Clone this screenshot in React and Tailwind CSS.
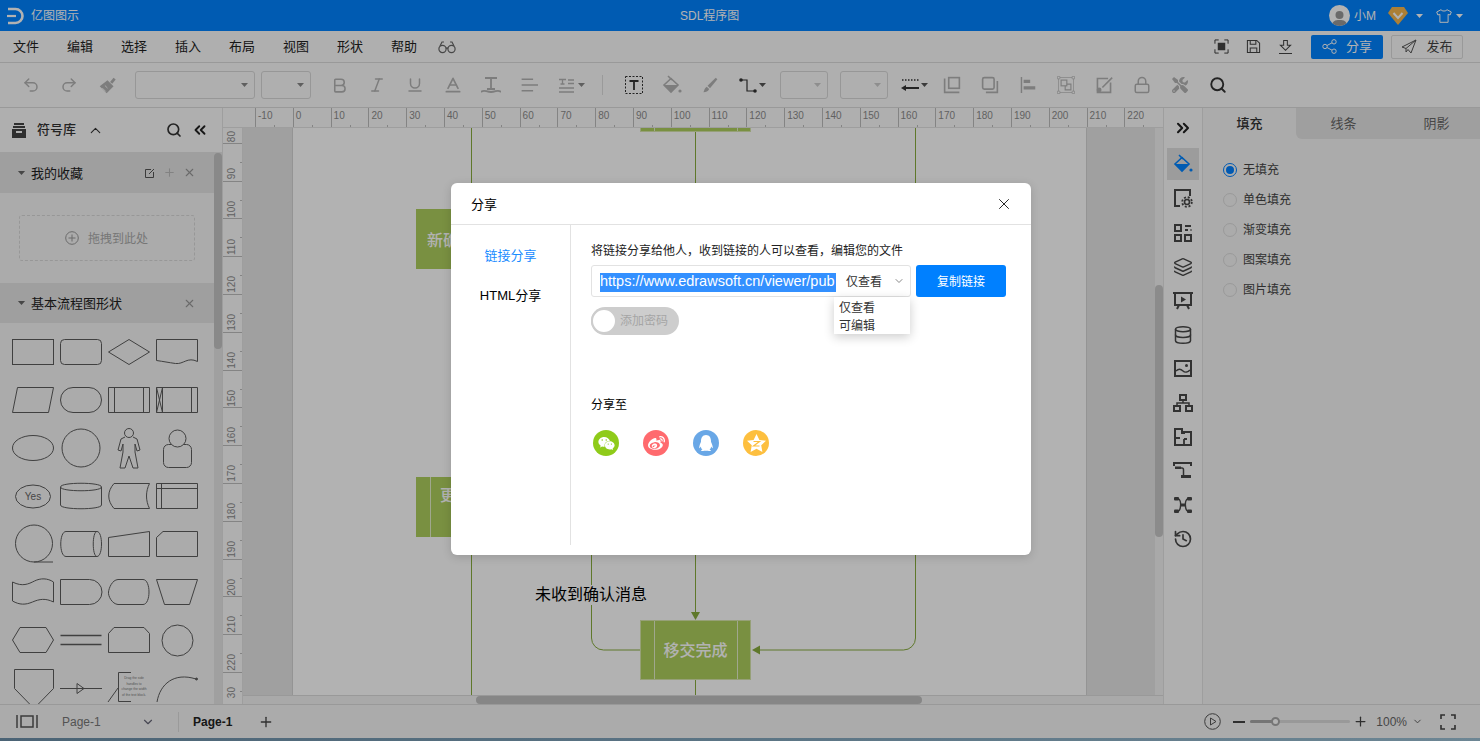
import {
  Baseline, Bold, ChevronDown, ChevronUp, ChevronsLeft, ChevronsRight, Database, History, Italic, Layers, Lock, Plus, Redo2,
  Search, Underline, Undo2, X,
} from 'lucide-react';
import { FaQq, FaTools, FaWeibo, FaWeixin } from 'react-icons/fa';

const font = { fontFamily: '"Liberation Sans", "Noto Sans CJK SC", sans-serif' };

const Caret = ({ className = '' }) => (
  <svg width="7" height="4" viewBox="0 0 9 5" className={className}><path d="M0 0h9L4.500 5z" fill="currentColor" /></svg>
);

const Svg = ({ size = 18, children, className = '', strokeWidth = 2 }) => (
  <svg width={size} height={size} viewBox="0 0 22 22" fill="none" stroke="currentColor" strokeWidth={strokeWidth} className={className}>
    {children}
  </svg>
);

/* ---------- left toolbar icons ---------- */
const BrushIcon = () => (
  <Svg size={19}>
    <path d="M2 12L11 5l7 7-8 8z" fill="currentColor" stroke="none" />
    <path d="M14 7l4-5 2.500 2-4 5z" fill="currentColor" stroke="none" />
    <path d="M5 14l4 4M8 11l3 3" stroke="#fbfbfb" strokeWidth="1" />
  </Svg>
);
const AlignIcon = () => (
  <Svg><path d="M2 4h14M2 11h20M2 18h14" /></Svg>
);
const TextLinesIcon = () => (
  <svg width="15" height="15" viewBox="0 0 15 15" fill="none" stroke="currentColor" strokeWidth="1.300">
    <path d="M0 1.500h7M3.500 1.500v4.500M1.500 6h4M9 2h6M9 5.500h6M0 10h15M0 14h15" />
  </svg>
);
const TextBoxIcon = () => (
  <svg width="18" height="18" viewBox="0 0 18 18" fill="none" stroke="#333" strokeWidth="1">
    <rect x="0.500" y="0.500" width="17" height="17" strokeDasharray="2 1.500" />
    <path d="M4.500 5h9M9 5v9" strokeWidth="1.800" />
  </svg>
);
const BucketIcon = ({ color = '#b4b4b4' }) => (
  <svg width="20" height="20" viewBox="0 0 20 20" fill="none" stroke={color} strokeWidth="1.600">
    <path d="M6 1l4 4" />
    <path d="M9 3.500l7 6.500-7 7-7-7z" />
    <path d="M2 10h14l-7 7z" fill={color} stroke="none" />
    <circle cx="18" cy="16" r="1.600" fill={color} stroke="none" />
  </svg>
);
const PenIcon = () => (
  <Svg><path d="M18 2l2 2-9 11-3-3z" fill="currentColor" stroke="none" /><path d="M7 13l3 3c-1 3-4 4-7 4 1-2 1-5 4-7z" fill="currentColor" stroke="none" /></Svg>
);
const ConnectorIcon = () => (
  <svg width="18" height="15" viewBox="0 0 18 15" fill="none" stroke="#333" strokeWidth="1.200">
    <path d="M2 2h6v11h8" />
    <circle cx="2" cy="2" r="1.800" fill="#333" stroke="none" />
    <circle cx="16" cy="13" r="1.800" fill="#333" stroke="none" />
  </svg>
);
const LineStyleIcon = () => (
  <svg width="18" height="14" viewBox="0 0 18 14" fill="none" stroke="#333" strokeWidth="1.500">
    <path d="M1 2h17" strokeDasharray="1.500 1.500" />
    <path d="M3 10h15" strokeWidth="2" />
    <path d="M0 10l5-3v6z" fill="#333" stroke="none" />
  </svg>
);
const FrontIcon = () => (
  <Svg><path d="M2 3v17h18" /><rect x="7" y="2" width="13" height="13" /></Svg>
);
const BackIcon = () => (
  <Svg><rect x="2" y="2" width="14" height="14" rx="2" /><path d="M20 6v14H6" /></Svg>
);
const AlignBarsIcon = () => (
  <Svg size={16}><path d="M2 0v22" /><path d="M5 6h9M5 15h16" strokeWidth="4.500" /></Svg>
);
const GroupIcon = () => (
  <Svg strokeWidth="1.400">
    <rect x="2" y="2" width="18" height="18" strokeWidth="0.800" />
    <rect x="5" y="5" width="7" height="7" />
    <path d="M12 10h5v7h-7v-5" />
    <path d="M0.500 0.500h3v3h-3zM18.500 0.500h3v3h-3zM0.500 18.500h3v3h-3zM18.500 18.500h3v3h-3z" fill="#fff" strokeWidth="0.800" />
  </Svg>
);
const EditBoxIcon = () => (
  <Svg><path d="M19 8v12H3V3h13" /><path d="M21 2L9 14" /><circle cx="5" cy="17" r="3" fill="currentColor" stroke="none" /></Svg>
);

/* ---------- header icons ---------- */
const Logo = () => (
  <svg width="18" height="18" viewBox="0 0 18 18" fill="none" stroke="#fff">
    <path d="M1 2h7.500a7 7 0 0 1 0 14H1" strokeWidth="2.600" />
    <path d="M0 9h9" strokeWidth="2.200" />
  </svg>
);
const Glasses = () => (
  <svg width="18" height="14" viewBox="0 0 18 14" fill="none" stroke="#666" strokeWidth="1.200">
    <circle cx="4.500" cy="9" r="3.600" /><circle cx="13.500" cy="9" r="3.600" />
    <path d="M8 8.500c.6-.6 1.400-.6 2 0M2 6l2-4h2M16 6l-2-4h-2" />
  </svg>
);
const Shirt = () => (
  <svg width="16" height="14" viewBox="0 0 16 14" fill="none" stroke="#fff" strokeWidth="1">
    <path d="M5 .7L.7 3l1.200 3 2-.7V13.300h8.200V5.300l2 .7 1.200-3L11 .7C10.500 2.500 5.500 2.500 5 .7z" />
  </svg>
);
const FocusIcon = () => (
  <svg width="15" height="15" viewBox="0 0 16 16" fill="none" stroke="#333" strokeWidth="1">
    <path d="M1 5V1h4M11 1h4v4M15 11v4h-4M5 15H1v-4" />
    <rect x="4" y="4" width="8" height="8" fill="#444" stroke="none" />
  </svg>
);
const SaveIcon = () => (
  <svg width="15" height="15" viewBox="0 0 16 16" fill="none" stroke="#444" strokeWidth="1.100">
    <path d="M1.500 1.500h10l3 3v10h-13z" /><path d="M4.500 1.500v4h6v-4M4.500 14.500v-5h7v5" />
  </svg>
);
const DownloadIcon = () => (
  <svg width="13" height="16" viewBox="0 0 14 16" fill="none" stroke="#444" strokeWidth="1.100">
    <path d="M5 1h4v5h3.500L7 11.500 1.500 6H5zM0 15h14" />
  </svg>
);
const ShareIcon = () => (
  <svg width="15" height="15" viewBox="0 0 15 15" fill="none" stroke="#fff" strokeWidth="1">
    <circle cx="3" cy="7.500" r="2.200" /><circle cx="12" cy="2.800" r="2.200" /><circle cx="12" cy="12.200" r="2.200" />
    <path d="M5 6.500l5-2.700M5 8.500l5 2.700" />
  </svg>
);
const SendIcon = () => (
  <svg width="16" height="15" viewBox="0 0 16 15" fill="none" stroke="#555" strokeWidth="1">
    <path d="M15 1L1 8l4 1.500L15 1l-5 13-3-3.500M5 9.500V13l2-2.500" />
  </svg>
);

/* ---------- right strip icons ---------- */
const stripIcons = [
  <svg key="settings" width="20" height="20" viewBox="0 0 20 20" fill="none" stroke="currentColor" strokeWidth="2">
    <path d="M7 18H2V2h15v6" />
    <circle cx="14" cy="14" r="2.500" strokeWidth="1.600" />
    <circle cx="14" cy="14" r="4.800" strokeWidth="1.800" strokeDasharray="2 1.800" />
  </svg>,
  <svg key="grid" width="18" height="18" viewBox="0 0 18 18" fill="none" stroke="currentColor" strokeWidth="2">
    <rect x="1" y="1" width="6" height="6" /><rect x="1" y="11" width="6" height="6" /><rect x="11" y="11" width="6" height="6" />
    <path d="M11 2h6M11 6h3M17 6.500v-1" />
  </svg>,
  <Layers key="layers" size={20} strokeWidth={1.700} />,
  <svg key="slides" width="20" height="20" viewBox="0 0 20 20" fill="none" stroke="currentColor" strokeWidth="2">
    <path d="M0 2h20M2 2v12h16V2M6 14l-2 4M14 14l2 4" />
    <path d="M8 5.500l5 3-5 3z" fill="currentColor" stroke="none" />
  </svg>,
  <Database key="db" size={20} strokeWidth={1.800} />,
  <svg key="image" width="20" height="20" viewBox="0 0 20 20" fill="none" stroke="currentColor" strokeWidth="2">
    <rect x="2" y="2" width="16" height="15" /><path d="M3 12c3-3 5-2 7 0s5 1 7-1" strokeWidth="1.400" />
    <circle cx="13.500" cy="6.500" r="1.500" fill="currentColor" stroke="none" />
  </svg>,
  <svg key="org" width="20" height="20" viewBox="0 0 20 20" fill="none" stroke="currentColor" strokeWidth="2">
    <rect x="7" y="2" width="6" height="5" /><rect x="1" y="13" width="6" height="5" /><rect x="13" y="13" width="6" height="5" />
    <path d="M10 7v3M4 13v-3h12v3" strokeWidth="1.500" />
  </svg>,
  <svg key="floor" width="20" height="20" viewBox="0 0 20 20" fill="none" stroke="currentColor" strokeWidth="2">
    <path d="M2 2h7v4h2V5h7v13H2z" />
    <path d="M9 2v5M2 11h5M11 12v6M11 12h3" strokeWidth="1.800" />
  </svg>,
  <svg key="gantt" width="20" height="20" viewBox="0 0 20 20" fill="none" stroke="currentColor" strokeWidth="2">
    <path d="M1 5V2h17v3M1 2h17" />
    <path d="M2 7h7c1 0 1.500 1 1.500 2v5" strokeWidth="1.500" />
    <rect x="8" y="14" width="10" height="3" fill="currentColor" stroke="none" />
    <rect x="2" y="5.500" width="6" height="2.500" fill="currentColor" stroke="none" />
  </svg>,
  <svg key="mind" width="20" height="20" viewBox="0 0 20 20" fill="none" stroke="currentColor" strokeWidth="1.400">
    <path d="M5 4c4 0 3 12 0 12M15 4c-4 0-3 12 0 12" />
    <rect x="1" y="2" width="5" height="3.500" rx="1" fill="currentColor" stroke="none" />
    <rect x="14" y="2" width="5" height="3.500" rx="1" fill="currentColor" stroke="none" />
    <rect x="1" y="14.500" width="5" height="3.500" rx="1" fill="currentColor" stroke="none" />
    <rect x="14" y="14.500" width="5" height="3.500" rx="1" fill="currentColor" stroke="none" />
    <rect x="7" y="8.500" width="6" height="3" fill="currentColor" stroke="none" />
  </svg>,
  <History key="history" size={20} strokeWidth={2} />,
];

/* ---------- symbol library drawings, cell box is 42 x 48 ---------- */
const shapes = [
  <rect x="0.500" y="11.500" width="41" height="25" />,
  <rect x="0.500" y="11.500" width="41" height="25" rx="4" />,
  <path d="M0.500 24L21 11.500 41.500 24 21 36.500z" />,
  <path d="M0.500 11.500h41v22c-10-5-14 3-22 2-7-1-12-2-19-3z" />,

  <path d="M0.500 36.500l5-25h36l-5 25z" />,
  <rect x="0.500" y="11.500" width="41" height="25" rx="12.500" />,
  <path d="M0.500 11.500h41v25h-41zM6.500 11.500v25M35.500 11.500v25" />,
  <path d="M0.500 11.500h41v25h-41zM6.500 11.500v25M35.500 11.500v25M0.500 11.500l6 25M6.500 11.500l-6 25" />,

  <ellipse cx="21" cy="24" rx="20.500" ry="12.500" />,
  <circle cx="21" cy="24" r="19" />,
  <g>
    <circle cx="21" cy="9" r="4.500" />
    <path d="M17 13l-4 2-3 11 3 1 2-7v8l-3 16h5l4-12 4 12h5l-3-16v-8l2 7 3-1-3-11-4-2" />
  </g>,
  <g>
    <rect x="7.500" y="20.500" width="28" height="23" rx="5" />
    <circle cx="21.500" cy="14.500" r="8.500" fill="#f5f5f5" />
  </g>,

  <ellipse cx="21" cy="24.500" rx="17.500" ry="11.500" />,
  <path d="M0.500 15c0-5 41-5 41 0v18c0 5-41 5-41 0zM0.500 15c0 5 41 5 41 0" />,
  <path d="M6 11.500h35.500c-4 8-4 17 0 25H6c-7-8-7-17 0-25z" />,
  <path d="M0.500 11.500h41v25h-41zM0.500 16.500h41M5.500 11.500v25" />,

  <g>
    <circle cx="22" cy="23.500" r="18.500" />
    <path d="M22 42h19" />
  </g>,
  <path d="M6 11.500h31c6 0 6 25 0 25H6c-7 0-7-25 0-25zM37 11.500c-5 0-5 25 0 25" />,
  <path d="M0.500 36.500v-19l41-6v25z" />,
  <path d="M7 11.500h34.500v25h-41v-19z" />,

  <path d="M0.500 14c10 5 16 2 22-1s13-3 19 1v20c-8-4-14-3-21 0s-13 3-20-1z" />,
  <path d="M0.500 11.500h29a12.500 12.500 0 0 1 0 25h-29z" />,
  <path d="M10 11.500h25c8 0 8 25 0 25H10C4 36 0 28 0.500 24 1 20 4 12 10 11.500z" />,
  <path d="M0.500 11.500h41l-8 25h-25z" />,

  <path d="M8 11.500h26l7.500 12.500L34 36.500H8L0.500 24z" />,
  <path d="M0.500 19.500h41M0.500 28.500h41" strokeWidth="1.500" />,
  <path d="M6 11.500h30l5.500 6v19h-41v-19z" />,
  <circle cx="21.500" cy="24.500" r="15.500" />,

  <path d="M2.500 5.500h39v19l-19.500 20-19.500-20z" />,
  <path d="M0 24.500h42M17 19.500l7 5-7 5z" />,
  <path d="M0 38l10-14M23 8.500H10.500v29H23" />,
  <g>
    <path d="M1 38C4 20 18 8 40 15" />
    <circle cx="40.500" cy="15" r="1" fill="#5c5c5c" />
  </g>,
];

const noteLines = ['Drag the side', 'handles to', 'change the width', 'of the text block.'];

const Shape = ({ children, label }) => (
  <svg width="42" height="48" viewBox="0 0 42 48" fill="none" stroke="#5c5c5c" strokeWidth="1" className="overflow-visible">
    {children}
    {label}
  </svg>
);

const ruler = Array.from({ length: 24 }, (_, i) => (i - 1) * 10);
const sideRuler = Array.from({ length: 16 }, (_, i) => 80 + i * 10);

const Radio = ({ checked, label }) => (
  <div className="flex h-[30px] items-center">
    <span className={`flex h-[14px] w-[14px] items-center justify-center rounded-full border bg-transparent ${checked ? 'border-[#0080ff]' : 'border-[#dcdcdc]'}`}>
      {checked && <span className="h-[8px] w-[8px] rounded-full bg-[#0080ff]" />}
    </span>
    <span className="ml-[6px] text-xs text-[#444]">{label}</span>
  </div>
);

const ToolCell = ({ children, className = 'w-[38px]' }) => (
  <div className={`flex shrink-0 items-center justify-center ${className}`}>{children}</div>
);

const SelectBox = ({ className, dark }) => (
  <div className={`flex h-[28px] shrink-0 items-center justify-end rounded-[3px] border border-[#d8d8d8] pr-[6px] ${className}`}>
    <Caret className={dark ? 'text-[#888]' : 'text-[#ccc]'} />
  </div>
);

const App = () => {
  const menus = ['文件', '编辑', '选择', '插入', '布局', '视图', '形状', '帮助'];

  return (
    <div className="relative flex h-[741px] w-[1480px] flex-col overflow-hidden bg-white" style={font}>
      {/* title bar */}
      <div className="flex h-[31px] shrink-0 items-center bg-[#0083ff] text-xs text-white">
        <div className="flex w-[680px] items-center pl-[7px]">
          <Logo />
          <span className="ml-[6px]">亿图图示</span>
        </div>
        <span>SDL程序图</span>
        <div className="ml-auto flex items-center pr-[17px]">
          <span className="flex h-[21px] w-[21px] items-end justify-center overflow-hidden rounded-full bg-white">
            <svg width="15" height="17" viewBox="0 0 15 17" fill="#999"><circle cx="7.500" cy="6" r="4" /><path d="M0 17c0-5 3-6 7.500-6s7.500 1 7.500 6z" /></svg>
          </span>
          <span className="ml-[4px] w-[34px]">小M</span>
          <svg width="20" height="18" viewBox="0 0 20 18"><path d="M4 0h12l4 6-10 12L0 6z" fill="#f5b74e" /><path d="M5.500 6l4.500 5 4.500-5" fill="none" stroke="#fff" strokeWidth="2" /></svg>
          <Caret className="ml-[8px]" />
          <span className="ml-[13px]"><Shirt /></span>
          <Caret className="ml-[4px]" />
        </div>
      </div>

      {/* menu bar */}
      <div className="flex h-[32px] shrink-0 items-center border-b border-[#dcdcdc] bg-[#fbfbfb] pl-[13px] text-[13px] text-[#222]">
        {menus.map((m) => (
          <span key={m} className="w-[54px]">{m}</span>
        ))}
        <span className="-ml-[7px]"><Glasses /></span>
        <div className="ml-auto flex items-center pr-[17px]">
          <FocusIcon />
          <span className="ml-[17px]"><SaveIcon /></span>
          <span className="ml-[18px]"><DownloadIcon /></span>
          <button className="ml-[19px] flex h-[24px] w-[72px] items-center justify-center gap-[9px] rounded-[2px] bg-[#0083ff] text-white">
            <ShareIcon /><span>分享</span>
          </button>
          <button className="ml-[8px] flex h-[24px] w-[72px] items-center justify-center gap-[9px] rounded-[2px] border border-[#dcdcdc] text-[#444]">
            <SendIcon /><span>发布</span>
          </button>
        </div>
      </div>

      {/* format toolbar */}
      <div className="flex h-[45px] shrink-0 items-center border-b border-[#dcdcdc] bg-[#fbfbfb] pl-[12px] text-[#b4b4b4]">
        <ToolCell><Undo2 size={18} strokeWidth={2} /></ToolCell>
        <ToolCell><Redo2 size={18} strokeWidth={2} /></ToolCell>
        <ToolCell><BrushIcon /></ToolCell>
        <SelectBox className="ml-[9px] w-[120px]" dark />
        <SelectBox className="ml-[6px] w-[50px]" dark />
        <div className="w-[9px]" />
        <ToolCell><Bold size={19} strokeWidth={2} /></ToolCell>
        <ToolCell><Italic size={18} strokeWidth={2} /></ToolCell>
        <ToolCell><Underline size={18} strokeWidth={2} /></ToolCell>
        <ToolCell><Baseline size={20} strokeWidth={2} /></ToolCell>
        <ToolCell>
          <svg width="20" height="20" viewBox="0 0 20 20" fill="none" stroke="currentColor" strokeWidth="1.800"><path d="M4 3h12M10 3v11M6 14h8M0 17c3-3 5 0 10 0s7-3 10 0" /></svg>
        </ToolCell>
        <ToolCell><AlignIcon /></ToolCell>
        <ToolCell className="w-[48px] gap-[4px]"><TextLinesIcon /><Caret className="text-[#888]" /></ToolCell>
        <div className="ml-[6px] h-[20px] w-px bg-[#ddd]" />
        <div className="w-[12px]" />
        <ToolCell><TextBoxIcon /></ToolCell>
        <ToolCell><BucketIcon /></ToolCell>
        <ToolCell><PenIcon /></ToolCell>
        <ToolCell className="w-[46px] gap-[2px]"><ConnectorIcon /><Caret className="text-[#555]" /></ToolCell>
        <SelectBox className="ml-[5px] w-[48px]" />
        <SelectBox className="ml-[12px] w-[48px]" />
        <ToolCell className="ml-[8px] w-[37px] gap-[2px]"><LineStyleIcon /><Caret className="text-[#555]" /></ToolCell>
        <ToolCell><FrontIcon /></ToolCell>
        <ToolCell><BackIcon /></ToolCell>
        <ToolCell><AlignBarsIcon /></ToolCell>
        <ToolCell><GroupIcon /></ToolCell>
        <ToolCell><EditBoxIcon /></ToolCell>
        <ToolCell><Lock size={18} strokeWidth={2} /></ToolCell>
        <ToolCell><FaTools size={16} /></ToolCell>
        <ToolCell><Search size={18} strokeWidth={2.500} className="text-[#333]" /></ToolCell>
      </div>

      {/* work area */}
      <div className="flex min-h-0 flex-1">
        {/* symbol library */}
        <div className="relative flex w-[223px] shrink-0 flex-col overflow-hidden border-r border-[#e2e2e2] bg-[#f5f5f5]">
          <div className="flex h-[44px] shrink-0 items-center bg-[#fbfbfb] pl-[12px] pr-[13px]">
            <svg width="14" height="15" viewBox="0 0 14 15" fill="#444"><rect x="2" y="0" width="10" height="2" /><rect x="1" y="3" width="12" height="2" /><path d="M0 6h14v9H0zM4 8v2h6V8z" fillRule="evenodd" /></svg>
            <span className="ml-[11px] text-[13px] font-medium text-[#333]">符号库</span>
            <ChevronUp size={17} strokeWidth={1.500} className="ml-[11px] text-[#333]" />
            <Search size={16} strokeWidth={2.500} className="ml-auto text-[#333]" />
            <ChevronsLeft size={18} strokeWidth={2.500} className="ml-[9px] text-[#222]" />
          </div>
          <div className="flex h-[41px] shrink-0 items-center bg-[#e4e4e4] pl-[17px] pr-[26px] text-[13px] text-[#222]">
            <Caret className="w-[9px] text-[#666]" />
            <span className="ml-[5px] pt-[2px]">我的收藏</span>
            <svg width="10" height="10" viewBox="0 0 10 10" fill="none" stroke="#555" className="ml-auto"><path d="M6 1.500H.5v8h8V4M4 6l5-5" /></svg>
            <Plus size={13} className="ml-[8px] text-[#bbb]" />
            <X size={13} className="ml-[7px] text-[#999]" />
          </div>
          <div className="h-[90px] shrink-0 pl-[19px] pt-[22px]">
            <div className="flex h-[46px] w-[176px] items-center rounded-[3px] border border-dashed border-[#d8d8d8] pl-[45px] text-xs text-[#aaa]">
              <svg width="14" height="14" viewBox="0 0 14 14" fill="none" stroke="#999"><circle cx="7" cy="7" r="6.300" /><path d="M3.500 7h7M7 3.500v7" /></svg>
              <span className="ml-[9px] pt-[2px]">拖拽到此处</span>
            </div>
          </div>
          <div className="flex h-[40px] shrink-0 items-center bg-[#e4e4e4] pl-[17px] pr-[26px] text-[13px] text-[#222]">
            <Caret className="w-[9px] text-[#666]" />
            <span className="ml-[5px] pt-[2px]">基本流程图形状</span>
            <X size={13} className="ml-auto text-[#999]" />
          </div>
          <div className="grid shrink-0 grid-cols-[repeat(4,42px)] gap-x-[6px] pl-[12px] pt-[5px]">
            {shapes.map((s, i) => (
              <Shape
                key={i}
                label={
                  i === 12 ? (
                    <text x="21" y="28" textAnchor="middle" fontSize="10" fill="#666" stroke="none">Yes</text>
                  ) : i === 30 ? (
                    <g>
                      {noteLines.map((line, j) => (
                        <text key={line} x="26" y={15 + j * 5.500} textAnchor="middle" fontSize="3.300" fill="#777" stroke="none">{line}</text>
                      ))}
                    </g>
                  ) : null
                }
              >
                {s}
              </Shape>
            ))}
          </div>
          {/* scrollbar */}
          <div className="absolute bottom-0 right-0 top-[44px] w-[8px] bg-[#e6e6e6]">
            <div className="mt-px h-[196px] rounded-[4px] bg-[#c4c4c4]" />
          </div>
        </div>

        {/* canvas column */}
        <div className="flex min-w-0 flex-1 flex-col">
          <div className="flex h-[20px] shrink-0 border-b border-[#e2e2e2] bg-[#fbfbfb] pl-[32px]">
            <div className="flex overflow-hidden">
              {ruler.map((n) => (
                <div key={n} className="relative h-[20px] w-[37.800px] shrink-0 border-l border-[#bdbdbd] pl-[2px] text-[10px] leading-[16px] text-[#8c8c8c]">
                  {n}
                  <span className="absolute bottom-0 left-[18px] h-[3px] w-px bg-[#bdbdbd]" />
                </div>
              ))}
            </div>
          </div>
          <div className="flex min-h-0 flex-1">
            <div className="h-full w-[20px] shrink-0 overflow-hidden border-r border-[#e2e2e2] bg-[#fbfbfb]">
              <div className="mt-[-22px]">
                {sideRuler.map((n) => (
                  <div key={n} className="relative h-[37.800px] w-[20px] border-b border-[#bdbdbd]">
                    <span className={`absolute left-[2px] rotate-180 text-[10px] leading-[14px] text-[#8c8c8c] [writing-mode:vertical-rl] ${n === 230 ? 'bottom-[12px]' : 'bottom-[1px]'}`}>
                      {n === 230 ? '30' : n}
                    </span>
                    <span className="absolute right-0 top-[18px] h-px w-[3px] bg-[#bdbdbd]" />
                  </div>
                ))}
              </div>
            </div>
            <div className="relative min-w-0 flex-1 overflow-hidden bg-[#e5e5e5]">
              <div className="relative ml-[50px] h-full w-[793px] bg-white shadow-[0_0_0_1px_#d4d4d4]">
                <svg className="absolute inset-0 h-full w-full" fill="none" stroke="#88ad3e" strokeWidth="1">
                  <g transform="translate(-293 -128)">
                    <path d="M471.500 127V695M915.500 127V638a12 12 0 0 1-12 12H755M591.500 555V585M591.500 605V638a12 12 0 0 0 12 12H640M695.500 132V616M695.500 680V695" />
                    <path d="M691 612h9l-4.500 8z" fill="#88ad3e" stroke="none" />
                    <path d="M752 650l8-4.500v9z" fill="#88ad3e" stroke="none" />
                  </g>
                </svg>
                <div className="absolute left-[347px] top-[-31px] flex h-[35px] w-[111px] border border-[#d7e6ad] bg-[#aecf5e]">
                  <div className="ml-[13px] h-full w-px bg-[#e6f0cc]" />
                  <div className="ml-[82px] h-full w-px bg-[#e6f0cc]" />
                </div>
                <div className="absolute left-[123px] top-[81px] flex h-[60px] w-[111px] items-center bg-[#aecf5e] pl-[11px] pt-[3px] text-base font-medium text-white">新确认消息</div>
                <div className="absolute left-[123px] top-[349px] h-[60px] w-[111px] bg-[#aecf5e] pl-[24px] pt-[7px] text-base font-medium leading-[24px] text-white">
                  更新状态
                  <span className="absolute bottom-0 left-[14px] top-0 w-px bg-[#e6f0cc]" />
                </div>
                <span className="absolute left-[242px] top-[457px] bg-white text-base leading-[20px] text-black">未收到确认消息</span>
                <div className="absolute left-[347px] top-[492px] flex h-[60px] w-[111px] items-center justify-center border border-[#d7e6ad] bg-[#aecf5e] pt-[2px] text-base font-medium text-white">
                  <span className="absolute bottom-0 left-[13px] top-0 w-px bg-[#e6f0cc]" />
                  <span className="absolute bottom-0 left-[96px] top-0 w-px bg-[#e6f0cc]" />
                  移交完成
                </div>
              </div>
              {/* canvas scrollbars */}
              <div className="absolute bottom-0 right-0 top-0 w-[8px] bg-[#f2f2f2]">
                <div className="mt-[157px] h-[252px] rounded-[4px] bg-[#c8c8c8]" />
              </div>
              <div className="absolute bottom-0 left-0 right-0 h-[9px] border-t border-[#dcdcdc] bg-[#f2f2f2]">
                <div className="ml-[233px] h-[8px] w-[446px] rounded-[4px] bg-[#c0c0c0]" />
              </div>
            </div>
          </div>
        </div>

        {/* right icon strip */}
        <div className="flex w-[40px] shrink-0 flex-col items-center border-l border-r border-[#e2e2e2] bg-[#fbfbfb] text-[#484848]">
          <div className="flex h-[40px] items-center"><ChevronsRight size={20} strokeWidth={2.500} className="text-[#222]" /></div>
          <div className="flex h-[32px] w-[32px] items-center justify-center bg-[#e0e0e0]"><BucketIcon color="#0083ff" /></div>
          {stripIcons.map((icon, i) => (
            <div key={i} className={`flex h-[34px] items-center ${i < 2 ? 'mt-px' : ''}`}>{icon}</div>
          ))}
        </div>

        {/* property panel */}
        <div className="w-[277px] shrink-0 bg-[#f5f5f5]">
          <div className="flex h-[31px] text-[13px]">
            <div className="flex w-[93px] items-center justify-center font-medium text-[#333]">填充</div>
            <div className="flex w-[93px] items-center justify-center rounded-bl-[6px] bg-[#e4e4e4] pl-[2px] text-[#666]">线条</div>
            <div className="flex flex-1 items-center justify-center bg-[#e4e4e4] pl-[4px] text-[#666]">阴影</div>
          </div>
          <div className="pl-[20px] pt-[16px]">
            <Radio checked label="无填充" />
            <Radio label="单色填充" />
            <Radio label="渐变填充" />
            <Radio label="图案填充" />
            <Radio label="图片填充" />
          </div>
        </div>
      </div>

      {/* status bar */}
      <div className="flex h-[34px] shrink-0 items-center border-t border-[#dcdcdc] bg-[#f5f5f5] text-[#555]">
        <svg width="22" height="13" viewBox="0 0 22 13" fill="none" stroke="#555" strokeWidth="1.500" className="ml-[16px]"><path d="M1 0v13M21 0v13" /><rect x="5" y="1" width="12" height="11" /></svg>
        <span className="ml-[24px] w-[79px] text-xs text-[#777]">Page-1</span>
        <ChevronDown size={14} className="text-[#667]" />
        <div className="ml-[23px] h-[20px] w-px bg-[#ddd]" />
        <span className="ml-[14px] text-xs font-bold text-[#222]">Page-1</span>
        <Plus size={16} strokeWidth={2} className="ml-[26px] text-[#444]" />
        <div className="ml-auto flex items-center pr-[24px]">
          <svg width="17" height="17" viewBox="0 0 17 17" fill="none" stroke="#555"><circle cx="8.500" cy="8.500" r="7.800" /><path d="M6.500 5l5.500 3.500L6.500 12z" /></svg>
          <span className="ml-[12px] h-[2px] w-[12px] bg-[#444]" />
          <div className="relative ml-[5px] h-[3px] w-[100px] rounded-full bg-[#dcdcdc]">
            <div className="h-full w-[26px] rounded-full bg-[#a8a8a8]" />
            <span className="absolute left-[21px] top-[-3px] h-[9px] w-[9px] rounded-full border-2 border-[#aaa] bg-white" />
          </div>
          <Plus size={15} strokeWidth={2} className="ml-[3px] text-[#444]" />
          <span className="ml-[8px] text-xs text-[#666]">100%</span>
          <ChevronDown size={11} className="ml-[5px] text-[#555]" />
          <svg width="16" height="16" viewBox="0 0 16 16" fill="none" stroke="#444" strokeWidth="1.600" className="ml-[17px]"><path d="M1 5V1h4M11 1h4v4M15 11v4h-4M5 15H1v-4" /></svg>
        </div>
      </div>
      <div className="h-[3px] shrink-0 bg-gradient-to-r from-[#6c8fa8] to-[#9cc0d4]" />

      {/* dialog overlay */}
      <div className="absolute inset-0 bg-black/30 pl-[451px] pt-[183px]">
        <div className="h-[372px] w-[580px] rounded-[6px] bg-white text-black shadow-[0_2px_10px_rgba(0,0,0,0.15)]">
          <div className="flex h-[42px] items-center justify-between border-b border-[#e2e2e2] pl-[20px] pr-[20px] text-[13px]">
            <span className="pt-[2px]">分享</span>
            <X size={18} strokeWidth={1.300} className="-mr-[2px] text-[#222]" />
          </div>
          <div className="flex">
            <div className="flex h-[320px] w-[120px] shrink-0 flex-col items-center border-r border-[#e2e2e2] pt-[21px] text-[13px]">
              <span className="h-[20px] leading-[20px] text-[#1a8cff]">链接分享</span>
              <span className="mt-[20px] h-[20px] leading-[20px]">HTML分享</span>
            </div>
            <div className="pl-[20px] pt-[17px]">
              <p className="h-[18px] text-xs leading-[18px] text-[#222]">将链接分享给他人，收到链接的人可以查看，编辑您的文件</p>
              <div className="mt-[5px] flex">
                <div className="relative flex h-[32px] w-[320px] items-center rounded-[3px] border border-[#e2e2e2] pl-[8px]">
                  <span className="mt-[2px] flex h-[19px] w-[236px] items-center overflow-hidden whitespace-nowrap bg-[#3390ff] text-[14.500px] text-white">https://www.edrawsoft.cn/viewer/pub</span>
                  <span className="ml-[10px] pt-[2px] text-xs text-[#333]">仅查看</span>
                  <ChevronDown size={12} className="ml-[11px] text-[#888]" />
                  <div className="absolute left-[242px] top-[31px] h-[37px] w-[76px] bg-white pl-[5px] pt-[2px] text-xs leading-[18px] text-[#333] shadow-[0_3px_10px_rgba(0,0,0,0.2)]">
                    <div>仅查看</div>
                    <div>可编辑</div>
                  </div>
                </div>
                <button className="ml-[5px] h-[32px] w-[90px] rounded-[3px] bg-[#0080ff] pt-px text-xs text-white">复制链接</button>
              </div>
              <div className="mt-[10px] flex h-[28px] w-[88px] items-center rounded-full bg-[#cdcdcd]">
                <span className="h-[26px] w-[26px] rounded-full border-2 border-[#cdcdcd] bg-white" />
                <span className="ml-[3px] text-xs text-[#a5a5a5]">添加密码</span>
              </div>
              <p className="mt-[61px] h-[18px] text-xs leading-[18px]">分享至</p>
              <div className="ml-[2px] mt-[16px] flex gap-[24px] text-white">
                <span className="flex h-[26px] w-[26px] items-center justify-center rounded-full bg-[#8fcb1a]"><FaWeixin size={17} /></span>
                <span className="flex h-[26px] w-[26px] items-center justify-center rounded-full bg-[#ff6a6e]"><FaWeibo size={17} /></span>
                <span className="flex h-[26px] w-[26px] items-center justify-center rounded-full bg-[#69a7e6]"><FaQq size={16} /></span>
                <span className="flex h-[26px] w-[26px] items-center justify-center rounded-full bg-[#fdbf3f]">
                  <svg width="19" height="18" viewBox="0 0 19 18">
                    <path d="M9.500 0l2.900 6 6.600.8-4.800 4.500 1.200 6.600-5.900-3.200-5.900 3.200 1.200-6.600L0 6.800 6.600 6z" fill="#fff" />
                    <path d="M6.500 7.500h6l-6 4.500h6" fill="none" stroke="#fdbf3f" strokeWidth="1.200" />
                  </svg>
                </span>
              </div>
            </div>
          </div>
        </div>
      </div>
    </div>
  );
};

export default App;
